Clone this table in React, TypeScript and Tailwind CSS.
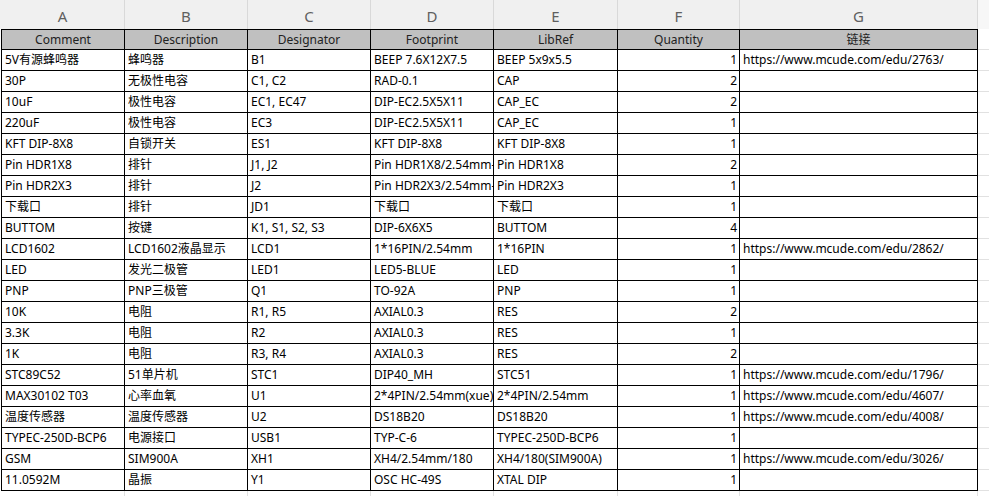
import type { FC } from "react";

type Row = [string, string, string, string, string, number, string];

const COLUMNS = ["A", "B", "C", "D", "E", "F", "G"];
const HEADERS = ["Comment", "Description", "Designator", "Footprint", "LibRef", "Quantity", "链接"];

// full class names so tailwind picks them up
const WIDTHS = ["w-[124px]", "w-[123px]", "w-[123px]", "w-[123px]", "w-[124px]", "w-[122px]", "w-[238px]"];

const ROWS: Row[] = [
  ["5V有源蜂鸣器", "蜂鸣器", "B1", "BEEP 7.6X12X7.5", "BEEP 5x9x5.5", 1, "https://www.mcude.com/edu/2763/"],
  ["30P", "无极性电容", "C1, C2", "RAD-0.1", "CAP", 2, ""],
  ["10uF", "极性电容", "EC1, EC47", "DIP-EC2.5X5X11", "CAP_EC", 2, ""],
  ["220uF", "极性电容", "EC3", "DIP-EC2.5X5X11", "CAP_EC", 1, ""],
  ["KFT DIP-8X8", "自锁开关", "ES1", "KFT DIP-8X8", "KFT DIP-8X8", 1, ""],
  ["Pin HDR1X8", "排针", "J1, J2", "Pin HDR1X8/2.54mm-S", "Pin HDR1X8", 2, ""],
  ["Pin HDR2X3", "排针", "J2", "Pin HDR2X3/2.54mm-S", "Pin HDR2X3", 1, ""],
  ["下载口", "排针", "JD1", "下载口", "下载口", 1, ""],
  ["BUTTOM", "按键", "K1, S1, S2, S3", "DIP-6X6X5", "BUTTOM", 4, ""],
  ["LCD1602", "LCD1602液晶显示", "LCD1", "1*16PIN/2.54mm", "1*16PIN", 1, "https://www.mcude.com/edu/2862/"],
  ["LED", "发光二极管", "LED1", "LED5-BLUE", "LED", 1, ""],
  ["PNP", "PNP三极管", "Q1", "TO-92A", "PNP", 1, ""],
  ["10K", "电阻", "R1, R5", "AXIAL0.3", "RES", 2, ""],
  ["3.3K", "电阻", "R2", "AXIAL0.3", "RES", 1, ""],
  ["1K", "电阻", "R3, R4", "AXIAL0.3", "RES", 2, ""],
  ["STC89C52", "51单片机", "STC1", "DIP40_MH", "STC51", 1, "https://www.mcude.com/edu/1796/"],
  ["MAX30102 T03", "心率血氧", "U1", "2*4PIN/2.54mm(xue)", "2*4PIN/2.54mm", 1, "https://www.mcude.com/edu/4607/"],
  ["温度传感器", "温度传感器", "U2", "DS18B20", "DS18B20", 1, "https://www.mcude.com/edu/4008/"],
  ["TYPEC-250D-BCP6", "电源接口", "USB1", "TYP-C-6", "TYPEC-250D-BCP6", 1, ""],
  ["GSM", "SIM900A", "XH1", "XH4/2.54mm/180", "XH4/180(SIM900A)", 1, "https://www.mcude.com/edu/3026/"],
  ["11.0592M", "晶振", "Y1", "OSC HC-49S", "XTAL DIP", 1, ""],
];

const App: FC = () => {
  return (
    <div
      className="w-[989px] h-[496px] overflow-hidden bg-white text-[12px] text-black"
      style={{ fontFamily: '"Noto Sans", "Noto Sans CJK SC", sans-serif' }}
    >
      {/* column letters */}
      <div className="flex h-[29px] bg-[#f0f0f0] pl-px">
        {COLUMNS.map((c, i) => (
          <div
            key={c}
            className={`${WIDTHS[i]} shrink-0 flex items-center justify-center pt-[4px] text-[15px] text-[#5f5f5f] border-r border-[#d9d9d9]`}
          >
            {c}
          </div>
        ))}
        <div className="flex-1 bg-[#f7f7f7]" />
      </div>

      {/* header row */}
      <div className="flex h-[21px] pl-px">
        {HEADERS.map((h, i) => (
          <div
            key={h}
            className={`${WIDTHS[i]} shrink-0 flex items-center justify-center bg-[#c0c0c0] text-[#222] border-y border-r border-black ${
              i === 0 ? "border-l" : ""
            }`}
          >
            {h}
          </div>
        ))}
        <div className="flex-1 border-b border-[#e1e1e1]" />
      </div>

      {ROWS.map((row, r) => (
        <div key={`row-${r}`} className="flex h-[21px] pl-px">
          {row.map((cell, i) => (
            <div
              key={`cell-${r}-${i}`}
              className={`${WIDTHS[i]} shrink-0 flex items-center overflow-hidden whitespace-nowrap border-b border-r border-black ${
                i === 0 ? "border-l" : ""
              } ${i === 5 ? "justify-end pr-[2px]" : "pl-[3px]"}`}
            >
              {cell}
            </div>
          ))}
          <div className="flex-1 border-b border-[#e1e1e1]" />
        </div>
      ))}

      {/* gridline stubs below the table */}
      <div className="flex h-[10px] pl-px">
        {WIDTHS.map((w, i) => (
          <div key={`stub-${i}`} className={`${w} shrink-0 border-r border-[#e1e1e1]`} />
        ))}
      </div>
    </div>
  );
};

export default App;
